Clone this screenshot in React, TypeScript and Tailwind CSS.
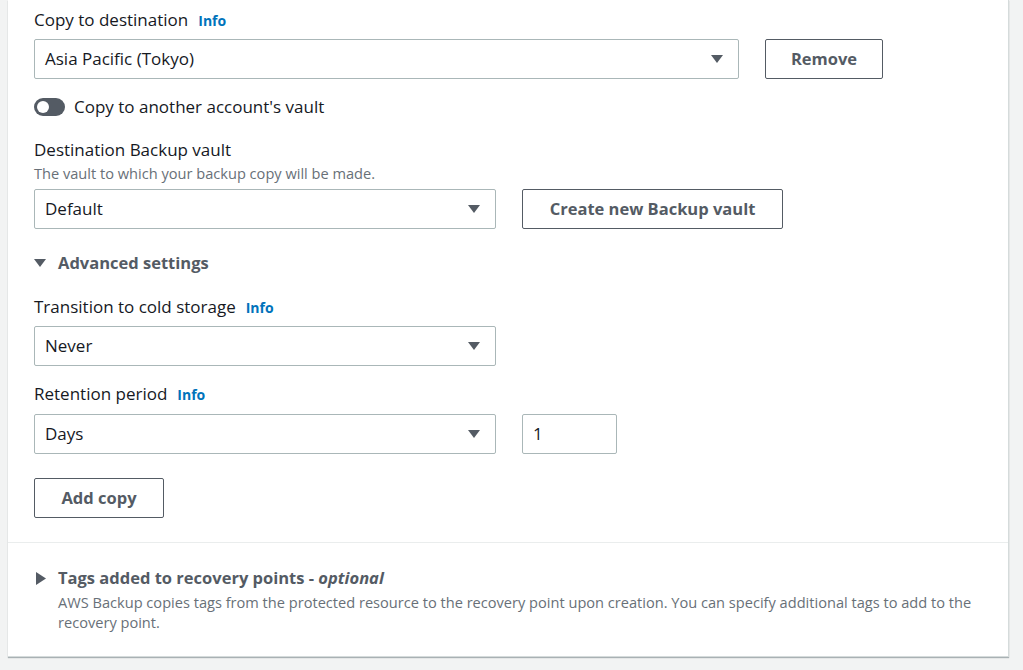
import React from "react";

const font = { fontFamily: '"Open Sans", "Noto Sans", Arial, sans-serif' };

const Caret = ({ dir = "down" }: { dir?: "down" | "right" }) =>
  dir === "down" ? (
    <svg width="12" height="8" viewBox="0 0 12 8" className="shrink-0">
      <path d="M0 0h12L6 8z" fill="#545b64" />
    </svg>
  ) : (
    <svg width="10" height="13" viewBox="0 0 10 13" className="shrink-0">
      <path d="M0 0v13l10-6.5z" fill="#545b64" />
    </svg>
  );

const Label = ({ children, info, className = "" }: { children: React.ReactNode; info?: boolean; className?: string }) => (
  <div className={`flex h-[22px] items-center text-[17px] leading-[22px] text-[#16191f] ${className}`}>
    <span>{children}</span>
    {info && <span className="ml-[10px] pt-[2px] text-[14px] font-bold leading-none text-[#0073bb]">Info</span>}
  </div>
);

const Select = ({ value, width }: { value: string; width: string }) => (
  <div className={`flex h-10 items-center justify-between rounded-[2px] border border-[#aab7b8] pl-[10px] pr-[15px] text-[17px] text-[#16191f] ${width}`}>
    <span>{value}</span>
    <Caret />
  </div>
);

const Button = ({ children, width }: { children: React.ReactNode; width: string }) => (
  <button className={`flex h-10 items-center justify-center rounded-[2px] border border-[#545b64] bg-white text-[16.5px] font-bold text-[#545b64] ${width}`}>
    {children}
  </button>
);

export default function App() {
  return (
    <div className="min-h-screen bg-[#f2f3f3] pl-2 pr-[14px]" style={font}>
      <div className="border-b border-r border-[#d5dbdb] bg-white shadow-[0_1px_1px_rgba(0,28,36,0.3)]">
        <div className="px-[26px] pb-6 pt-[9px]">
          <Label info>Copy to destination</Label>
          <div className="mt-2 flex gap-[26px]">
            <Select value="Asia Pacific (Tokyo)" width="w-[705px]" />
            <Button width="w-[118px]">Remove</Button>
          </div>

          <div className="mt-[17px] flex h-[22px] items-center gap-[9px] text-[17px] leading-[22px] text-[#16191f]">
            <div className="flex h-[18px] w-[31px] items-center rounded-full bg-[#545b64] px-[3px]">
              <div className="h-3 w-3 rounded-full bg-white" />
            </div>
            <span>Copy to another account's vault</span>
          </div>

          <Label className="mt-[21px]">Destination Backup vault</Label>
          <div className="mt-[2px] text-[14.6px] leading-5 text-[#687078]">The vault to which your backup copy will be made.</div>
          <div className="mt-[6px] flex gap-[26px]">
            <Select value="Default" width="w-[462px]" />
            <Button width="w-[261px]">Create new Backup vault</Button>
          </div>

          <div className="mt-[23px] flex h-[22px] items-center gap-3 text-[16.5px] font-bold leading-[22px] text-[#545b64]">
            <Caret />
            <span>Advanced settings</span>
          </div>

          <Label info className="mt-[22px]">Transition to cold storage</Label>
          <div className="mt-2">
            <Select value="Never" width="w-[462px]" />
          </div>

          <Label info className="mt-[17px]">Retention period</Label>
          <div className="mt-[9px] flex gap-[26px]">
            <Select value="Days" width="w-[462px]" />
            <div className="flex h-10 w-[95px] items-center rounded-[2px] border border-[#aab7b8] px-[10px] text-[17px] text-[#16191f]">1</div>
          </div>

          <div className="mt-6">
            <Button width="w-[130px]">Add copy</Button>
          </div>
        </div>

        <div className="border-t border-[#eaeded] pb-6 pl-[28px] pr-[26px] pt-6">
          <div className="flex h-[22px] items-center gap-3 text-[16.5px] font-bold leading-[22px] text-[#545b64]">
            <Caret dir="right" />
            <span>
              Tags added to recovery points - <i>optional</i>
            </span>
          </div>
          <p className="mt-[3px] pl-[22px] text-[14.6px] leading-5 text-[#687078]">
            AWS Backup copies tags from the protected resource to the recovery point upon creation. You can specify additional tags to add to the recovery point.
          </p>
        </div>
      </div>
    </div>
  );
}
